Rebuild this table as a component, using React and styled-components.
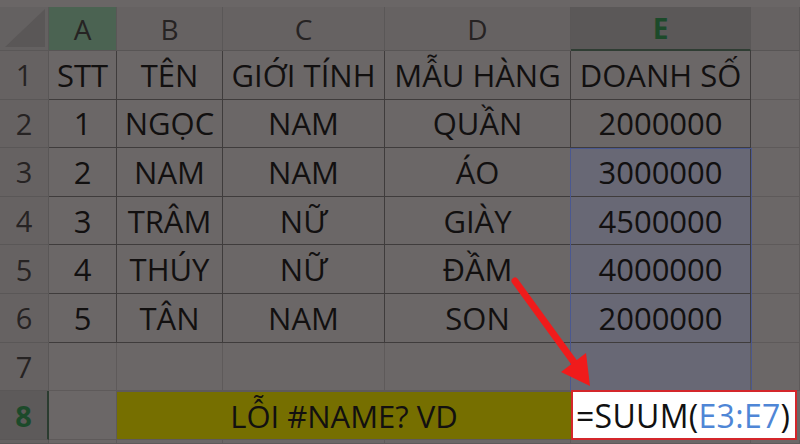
import React from 'react';
import styled, { createGlobalStyle } from 'styled-components';

const GlobalStyle = createGlobalStyle`
  html, body {
    margin: 0;
    padding: 0;
    background: #6b6767;
    overflow: hidden;
  }
  * {
    box-sizing: border-box;
  }
`;

const Sheet = styled.div`
  position: relative;
  width: 800px;
  height: 444px;
  display: grid;
  grid-template-columns: 49px 68px 106px 162px 186px 180px 49px;
  grid-template-rows: 7px 44px repeat(7, 48.6px) 49px 1fr;
  font-family: 'Open Sans', 'Noto Sans', sans-serif;
  color: #121010;
  background: #6b6767;
  overflow: hidden;
`;

const TopStrip = styled.div`
  grid-column: 1 / -1;
  background: #6a6666;
`;

const Corner = styled.div`
  position: relative;
  background: #646161;
  border-right: 1px solid #5a5757;
  border-bottom: 1px solid #5a5757;

  &::after {
    content: '';
    position: absolute;
    right: 3px;
    bottom: 3px;
    width: 40px;
    height: 38px;
    background: #5a5757;
    clip-path: polygon(100% 0, 100% 100%, 0 100%);
  }
`;

const ColHead = styled.div`
  display: flex;
  align-items: center;
  justify-content: center;
  font-size: 28px;
  font-weight: ${p => (p.active ? 700 : 400)};
  color: ${p => (p.active ? '#1c4a2a' : '#262323')};
  background: ${p => (p.tone === 'green' ? '#4b6352' : p.active ? '#5b5858' : '#666262')};
  border-right: 1px solid #5a5757;
  border-bottom: ${p => (p.active ? '2px solid #2f3d33' : '1px solid #585555')};
`;

const RowHead = styled.div`
  display: flex;
  align-items: center;
  justify-content: center;
  font-size: 29px;
  font-weight: ${p => (p.active ? 700 : 400)};
  color: ${p => (p.active ? '#1c4a2a' : '#262323')};
  background: ${p => (p.active ? '#5d5a5a' : '#666262')};
  border-right: ${p => (p.active ? '2px solid #2b3c30' : '1px solid #5a5757')};
  border-bottom: 1px solid #5a5757;
`;

const Cell = styled.div`
  display: flex;
  align-items: center;
  justify-content: center;
  font-size: 31px;
  white-space: nowrap;
  background: ${p => (p.selected ? '#686875' : '#6b6767')};
  border-right: 1px solid ${p => (p.table ? '#3f3c3c' : '#5e5a5a')};
  border-bottom: 1px solid ${p => (p.table ? '#3f3c3c' : '#5e5a5a')};
`;

const Banner = styled.div`
  grid-column: span 3;
  display: flex;
  align-items: center;
  justify-content: center;
  font-size: 31px;
  background: #766f00;
  border-top: 1px solid #5e5a5a;
  border-bottom: 1px solid #5e5a5a;
`;

const FormulaCell = styled.div`
  grid-column: span 2;
  margin: -1px 3px 0 0;
  display: flex;
  align-items: center;
  padding-left: 3px;
  font-size: 32px;
  letter-spacing: 0.3px;
  background: #ffffff;
  color: #111;
  border: 2px solid #d4262b;
  z-index: 2;
`;

const Ref = styled.span`
  color: #4f86d6;
`;

const Caret = styled.span`
  margin-left: 5px;
  width: 2px;
  height: 40px;
  background: #8a8a8a;
`;

const Selection = styled.div`
  position: absolute;
  left: 570px;
  top: 148px;
  width: 182px;
  height: 243px;
  border: 1px solid #4a5890;
  pointer-events: none;
`;

const Arrow = styled.svg`
  position: absolute;
  left: 0;
  top: 0;
  width: 800px;
  height: 444px;
  pointer-events: none;
  z-index: 3;
`;

const columns = ['A', 'B', 'C', 'D', 'E', ''];

const rows = [
  ['STT', 'TÊN', 'GIỚI TÍNH', 'MẪU HÀNG', 'DOANH SỐ'],
  ['1', 'NGỌC', 'NAM', 'QUẦN', '2000000'],
  ['2', 'NAM', 'NAM', 'ÁO', '3000000'],
  ['3', 'TRÂM', 'NỮ', 'GIÀY', '4500000'],
  ['4', 'THÚY', 'NỮ', 'ĐẦM', '4000000'],
  ['5', 'TÂN', 'NAM', 'SON', '2000000'],
];

export default function App() {
  return (
    <>
      <GlobalStyle />
      <Sheet>
        <TopStrip />
        <Corner />
        {columns.map((c, i) => (
          <ColHead key={i} tone={c === 'A' ? 'green' : undefined} active={c === 'E'}>
            {c}
          </ColHead>
        ))}

        {rows.map((r, ri) => (
          <React.Fragment key={ri}>
            <RowHead>{ri + 1}</RowHead>
            {r.map((v, ci) => (
              <Cell key={ci} table selected={ci === 4 && ri >= 2}>
                {v}
              </Cell>
            ))}
            <Cell />
          </React.Fragment>
        ))}

        <RowHead>7</RowHead>
        <Cell />
        <Cell />
        <Cell />
        <Cell />
        <Cell selected />
        <Cell />

        <RowHead active>8</RowHead>
        <Cell />
        <Banner>LỖI #NAME? VD</Banner>
        <FormulaCell>
          =SUUM(<Ref>E3:E7</Ref>)<Caret />
        </FormulaCell>

        <RowHead />
        <Cell />
        <Cell />
        <Cell />
        <Cell />
        <Cell />
        <Cell />

        <Selection />
        <Arrow viewBox="0 0 800 444">
          <line x1="515" y1="281" x2="576" y2="365" stroke="#f01b1b" strokeWidth="7" strokeLinecap="round" />
          <polygon points="590,386 561,372 586,353" fill="#f01b1b" />
        </Arrow>
      </Sheet>
    </>
  );
}
